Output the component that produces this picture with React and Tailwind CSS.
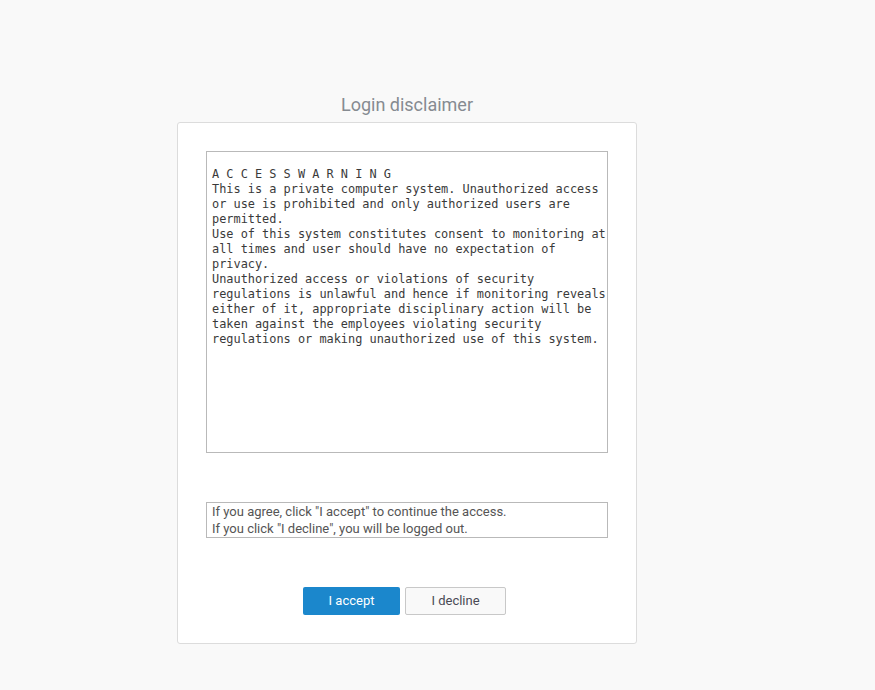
const warning = [
    "A C C E S S W A R N I N G",
    "This is a private computer system. Unauthorized access",
    "or use is prohibited and only authorized users are",
    "permitted.",
    "Use of this system constitutes consent to monitoring at",
    "all times and user should have no expectation of",
    "privacy.",
    "Unauthorized access or violations of security",
    "regulations is unlawful and hence if monitoring reveals",
    "either of it, appropriate disciplinary action will be",
    "taken against the employees violating security",
    "regulations or making unauthorized use of this system.",
];

const App = () => {
    return (
        <div className="min-h-screen bg-[#f9f9f9] pt-[93px] pl-[177px] font-['Roboto',sans-serif]">
            <div className="w-[460px]">
                {/* Title */}
                <h1 className="text-center text-[18px] leading-[24px] text-[#868b91] mb-[5px]">
                    Login disclaimer
                </h1>

                {/* Card */}
                <div className="bg-white border border-[#dcdcdc] rounded-[3px] pt-[28px] px-[28px] pb-[28px]">
                    <div className="w-[402px] h-[302px] border border-[#b9b9b9] pt-[15px] pl-[5px] overflow-hidden">
                        <pre className="font-['DejaVu_Sans_Mono',monospace] text-[11.9px] leading-[15px] text-[#3a3a3a]">
                            {warning.join("\n")}
                        </pre>
                    </div>

                    <div className="w-[402px] h-[36px] mt-[49px] border border-[#b9b9b9] pl-[5px] text-[13px] leading-[17px] text-[#555]">
                        <p>If you agree, click "I accept" to continue the access.</p>
                        <p>If you click "I decline", you will be logged out.</p>
                    </div>

                    {/* Actions */}
                    <div className="flex justify-center gap-[5px] mt-[49px] pr-[5px]">
                        <button className="w-[97px] h-[28px] bg-[#1b87cc] rounded-[2px] text-white text-[13px]">
                            I accept
                        </button>
                        <button className="w-[101px] h-[28px] bg-[#f9f9f9] border border-[#c8c8c8] rounded-[2px] text-[#4a4a55] text-[13px]">
                            I decline
                        </button>
                    </div>
                </div>
            </div>
        </div>
    );
};

export default App;
